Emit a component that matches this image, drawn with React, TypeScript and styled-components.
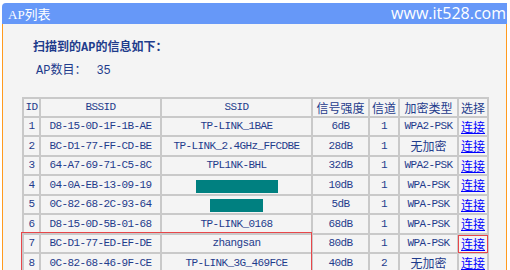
import React from 'react'
import styled, { createGlobalStyle, css } from 'styled-components'

const GlobalStyle = createGlobalStyle`
  html, body {
    margin: 0;
    background: #ffffff;
    overflow: hidden;
  }
`

type Ap = {
  id: number
  bssid: string
  ssid: string
  masked?: number
  signal: string
  channel: number
  enc: string
  picked?: boolean
}

const aps: Ap[] = [
  { id: 1, bssid: 'D8-15-0D-1F-1B-AE', ssid: 'TP-LINK_1BAE', signal: '6dB', channel: 1, enc: 'WPA2-PSK' },
  { id: 2, bssid: 'BC-D1-77-FF-CD-BE', ssid: 'TP-LINK_2.4GHz_FFCDBE', signal: '28dB', channel: 1, enc: '无加密' },
  { id: 3, bssid: '64-A7-69-71-C5-8C', ssid: 'TPL1NK-BHL', signal: '32dB', channel: 1, enc: 'WPA2-PSK' },
  { id: 4, bssid: '04-0A-EB-13-09-19', ssid: '', masked: 82, signal: '10dB', channel: 1, enc: 'WPA-PSK' },
  { id: 5, bssid: '0C-82-68-2C-93-64', ssid: '', masked: 53, signal: '5dB', channel: 1, enc: 'WPA-PSK' },
  { id: 6, bssid: 'D8-15-0D-5B-01-68', ssid: 'TP-LINK_0168', signal: '68dB', channel: 1, enc: 'WPA-PSK' },
  { id: 7, bssid: 'BC-D1-77-ED-EF-DE', ssid: 'zhangsan', signal: '80dB', channel: 1, enc: 'WPA-PSK', picked: true },
  { id: 8, bssid: '0C-82-68-46-9F-CE', ssid: 'TP-LINK_3G_469FCE', signal: '40dB', channel: 2, enc: '无加密' },
]

const isHan = (s: string) => /[\u4e00-\u9fff]/.test(s)

export default function App() {
  const picked = aps.findIndex(a => a.picked)

  return (
    <>
      <GlobalStyle />
      <Panel>
        <TitleBar>
          <Title>AP列表</Title>
          <Watermark>www.it528.com</Watermark>
        </TitleBar>
        <Body>
          <Heading>扫描到的AP的信息如下：</Heading>
          <Count>
            AP数目：<CountValue>35</CountValue>
          </Count>
          <Table>
            <Cell>ID</Cell>
            <Cell>BSSID</Cell>
            <Cell>SSID</Cell>
            <Cell><Han>信号强度</Han></Cell>
            <Cell><Han>信道</Han></Cell>
            <Cell><Han>加密类型</Han></Cell>
            <Cell><Han>选择</Han></Cell>
            {aps.map(ap => (
              <React.Fragment key={ap.id}>
                <Cell>{ap.id}</Cell>
                <Cell>{ap.bssid}</Cell>
                <Cell>{ap.masked ? <Masked $w={ap.masked} /> : ap.ssid}</Cell>
                <Cell>{ap.signal}</Cell>
                <Cell>{ap.channel}</Cell>
                <Cell>{isHan(ap.enc) ? <Han>{ap.enc}</Han> : ap.enc}</Cell>
                <Cell>
                  <Connect href="#" $boxed={ap.picked}>连接</Connect>
                </Cell>
              </React.Fragment>
            ))}
            {picked >= 0 && <Highlight $row={picked + 2} />}
          </Table>
        </Body>
      </Panel>
    </>
  )
}

const Panel = styled.div`
  width: 505px;
  margin: 3px 0 0 2px;
  display: flex;
  flex-direction: column;
`

const TitleBar = styled.div`
  height: 21px;
  background: #6698f8;
  border-radius: 4px 0 0 0;
  display: flex;
  align-items: center;
  justify-content: space-between;
  padding-left: 6px;
  color: #ffffff;
`

const Title = styled.span`
  font-family: "Liberation Serif", "Noto Sans CJK SC", serif;
  font-size: 13px;
`

const Watermark = styled.span`
  font-family: "Open Sans", "Noto Sans", sans-serif;
  font-size: 16px;
  line-height: 21px;
  margin-right: 1px;
`

const Body = styled.div`
  box-sizing: border-box;
  height: 246px;
  background: #f4f4f4;
  border-left: 1px solid #ff9a1e;
  border-right: 1px solid #ff9a1e;
  padding: 14px 0 0 19px;
  color: #1f3c8c;
`

const Heading = styled.div`
  font-family: "Liberation Mono", "Noto Sans CJK SC", monospace;
  font-size: 12px;
  font-weight: bold;
  line-height: 20px;
  margin: 0 0 3px 11px;
`

const Count = styled.div`
  font-family: "Liberation Mono", "Noto Sans CJK SC", monospace;
  font-size: 12px;
  line-height: 20px;
  margin: 0 0 16px 14px;
`

const CountValue = styled.span`
  margin-left: 10px;
`

const Table = styled.div`
  position: relative;
  display: grid;
  grid-template-columns: 15px 119px 149px 55px 28px 57px 28px;
  grid-template-rows: 17px 17px 18px 17px 18px 17px 18px 17px 18px;
  gap: 2px;
  padding: 2px;
  width: max-content;
  background: #c9c9c9;
  font-family: "Liberation Mono", "Noto Sans CJK SC", monospace;
  font-size: 11px;
  letter-spacing: -0.6px;
`

const Cell = styled.div`
  background: #f4f4f4;
  display: flex;
  align-items: center;
  justify-content: center;
  white-space: nowrap;
  line-height: 1;
`

const Han = styled.span`
  font-family: "Noto Sans CJK SC", sans-serif;
  font-size: 12px;
  letter-spacing: 0;
`

const Masked = styled.span<{ $w: number }>`
  display: block;
  width: ${p => p.$w}px;
  height: 13px;
  margin-top: 2px;
  background: #008080;
`

const Connect = styled.a<{ $boxed?: boolean }>`
  font-family: "Noto Sans CJK SC", sans-serif;
  font-size: 12px;
  letter-spacing: 0;
  color: #0000ff;
  text-decoration: underline;
  ${p =>
    p.$boxed &&
    css`
      outline: 1px solid #e8474a;
      outline-offset: 2px;
    `}
`

const Highlight = styled.div<{ $row: number }>`
  position: absolute;
  grid-row: ${p => p.$row};
  grid-column: 1 / 4;
  top: -3px;
  bottom: -1px;
  left: -3px;
  right: -1px;
  border: 1px solid #e8474a;
  pointer-events: none;
`
